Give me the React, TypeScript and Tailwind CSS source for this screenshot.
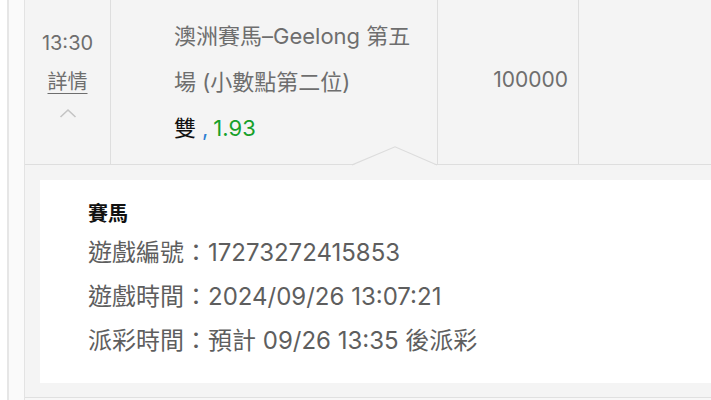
export default function App() {
  return (
    <div
      className="w-[711px] h-[400px] overflow-hidden bg-white flex"
      style={{ fontFamily: 'Inter, "Noto Sans CJK TC", sans-serif' }}
    >
      {/* left gutter */}
      <div className="w-[7px] bg-white" />
      <div className="w-[2px] bg-[#e6e6e6]" />
      <div className="w-[15px] bg-[#fafafa]" />

      <div className="flex-1 min-w-0 flex flex-col border-l border-[#e3e3e3] bg-[#f4f4f4]">
        {/* bet row */}
        <div className="flex h-[165px] border-b border-[#dedede] text-[#6e6e6e]">
          <div className="w-[86px] shrink-0 border-r border-[#dedede] flex flex-col items-center pt-[29px]">
            <div className="text-[20px] leading-[28px]">13:30</div>
            <div className="mt-[11px] text-[20px] leading-[28px] underline underline-offset-[4px] decoration-1">詳情</div>
            <svg className="mt-[12px]" width="18" height="10" viewBox="0 0 18 10">
              <polyline points="1.5,9 9,2 16.5,9" fill="none" stroke="#c4c4c4" strokeWidth="1.6" />
            </svg>
          </div>

          <div className="w-[327px] shrink-0 border-r border-[#dedede] pl-[63px] pt-[13px] text-[22px] leading-[46px]">
            <div className="whitespace-nowrap">澳洲賽馬–Geelong 第五</div>
            <div className="whitespace-nowrap">場 (小數點第二位)</div>
            <div className="whitespace-nowrap">
              <span className="text-[#111]">雙</span>
              <span className="ml-[6px] text-[#2d7fd3]">,</span>
              <span className="ml-[5px] text-[#17a02a]">1.93</span>
            </div>
          </div>

          <div className="w-[141px] shrink-0 border-r border-[#dedede] flex items-center justify-end pr-[10px] pb-[4px] text-[21px]">
            100000
          </div>

          <div className="flex-1" />
        </div>

        {/* detail panel */}
        <div className="relative pt-[15px] pl-[15px] pb-[14px] border-b border-[#e0e0e0]">
          <svg className="absolute left-[327px] top-[-19px]" width="86" height="20" viewBox="0 0 86 20">
            <polygon points="0,19.5 43,0.5 85,19.5" fill="#f4f4f4" />
            <polyline points="0,19 43,0.8 85,19" fill="none" stroke="#dcdcdc" strokeWidth="1.2" />
          </svg>
          <div className="h-[203px] bg-white pl-[48px] pt-[18px]">
            <div className="text-[20px] leading-[32px] font-bold text-[#111]">賽馬</div>
            <div className="mt-[1px] text-[24px] leading-[44px] text-[#5e5e5e]">
              <div className="whitespace-nowrap">遊戲編號：17273272415853</div>
              <div className="whitespace-nowrap">遊戲時間：2024/09/26 13:07:21</div>
              <div className="whitespace-nowrap">派彩時間：預計 09/26 13:35 後派彩</div>
            </div>
          </div>
        </div>

        <div className="flex-1 bg-[#f7f7f7]" />
      </div>
    </div>
  );
}
